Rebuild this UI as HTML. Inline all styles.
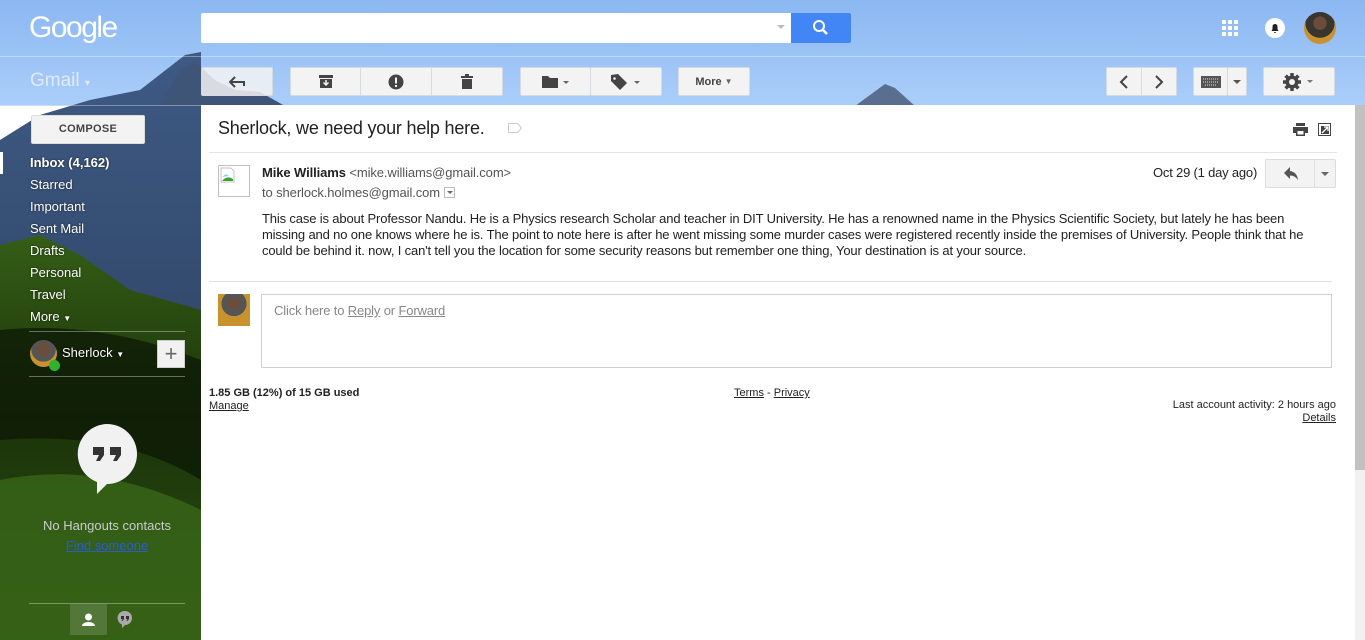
<!DOCTYPE html>
<html><head><meta charset="utf-8"><style>
*{box-sizing:border-box;margin:0;padding:0}
html,body{background:#fff}
body{width:1365px;height:635px;overflow:hidden;position:relative;font-family:"Liberation Sans",Arial,sans-serif;font-size:13px;color:#222;}
.abs{position:absolute}
.sky{position:absolute;left:0;top:0;width:1365px;height:106px;background:linear-gradient(180deg,#8bb7f2 0,#a9cdf9 100px)}
.bg{position:absolute;left:0;top:0;width:201px;height:640px;overflow:hidden}
.btn{position:absolute;top:67px;height:29px;background:#f3f3f3;border:1px solid #d6dbe2;border-radius:2px;display:flex;align-items:center;justify-content:center;color:#444}
.nav a{display:block;color:#fff;font-size:13px;height:22px;line-height:22px;text-shadow:0 0 2px rgba(0,0,0,.6)}
u{color:inherit}
</style></head><body>
<div class="sky"></div>
<div class="bg">
<svg width="201" height="640" viewBox="0 0 201 640">
<defs>
<linearGradient id="g" x1="0" y1="0" x2="0" y2="1"><stop offset="0" stop-color="#355e17"/><stop offset=".45" stop-color="#1b3309"/><stop offset="1" stop-color="#2b4f13"/></linearGradient>
<linearGradient id="m" x1="0" y1="0" x2="0" y2="1"><stop offset="0" stop-color="#3e5a84"/><stop offset="1" stop-color="#263650"/></linearGradient>
</defs>
<path d="M0 140 L40 115 L90 100 L140 90 L185 55 L201 52 L201 640 L0 640Z" fill="url(#m)"/>
<path d="M0 245 L40 235 L80 255 L130 290 L201 310 L201 640 L0 640Z" fill="url(#g)"/>
<path d="M0 330 Q100 320 201 360 L201 480 Q120 430 0 440Z" fill="#0c1805" opacity=".75"/>
<path d="M0 480 Q100 460 201 510 L201 640 L0 640Z" fill="#376417" opacity=".85"/>
</svg>
</div>
<svg class="abs" style="left:160px;top:50px" width="160" height="56"><path d="M0 56 L20 20 L35 12 L55 30 L75 40 L100 42 L125 56Z" fill="#3e5577"/></svg>
<svg class="abs" style="left:855px;top:78px" width="60" height="28"><path d="M0 28 L30 6 L40 10 L60 28Z" fill="#5a6f8f"/></svg>
<div class="abs" style="left:0;top:56px;width:1365px;height:1px;background:rgba(255,255,255,.35)"></div>
<div class="abs" style="left:0;top:105px;width:201px;height:1px;background:rgba(255,255,255,.35)"></div>
<div class="abs" style="left:29px;top:11px;color:#fff;font-size:30px;letter-spacing:-1.5px">Google</div>
<div class="abs" style="left:201px;top:13px;width:590px;height:30px;background:#fff;border-radius:2px 0 0 2px"></div>
<div class="abs" style="left:777px;top:25px;border:4px solid transparent;border-top-color:#bbb"></div>
<div class="abs" style="left:791px;top:13px;width:60px;height:30px;background:#4285f4;border-radius:0 2px 2px 0"><svg width="60" height="30"><circle cx="28" cy="13" r="5" stroke="#fff" stroke-width="2" fill="none"/><path d="M31.5 16.5 L36 21" stroke="#fff" stroke-width="2.5"/></svg></div>
<svg class="abs" style="left:1222px;top:20px" width="17" height="17" fill="#fff"><rect x="0" y="0" width="4" height="4"/><rect x="6" y="0" width="4" height="4"/><rect x="12" y="0" width="4" height="4"/><rect x="0" y="6" width="4" height="4"/><rect x="6" y="6" width="4" height="4"/><rect x="12" y="6" width="4" height="4"/><rect x="0" y="12" width="4" height="4"/><rect x="6" y="12" width="4" height="4"/><rect x="12" y="12" width="4" height="4"/></svg>
<div class="abs" style="left:1265px;top:18px;width:20px;height:20px;border-radius:50%;background:#fff"><svg width="20" height="20"><path d="M6.5 13 L7.5 11 V8.5 A2.5 2.5 0 0 1 12.5 8.5 V11 L13.5 13Z M9 14 h2 a1 1 0 0 1 -2 0" fill="#222"/></svg></div>
<div class="abs" style="left:1304px;top:12px;width:32px;height:32px;border-radius:50%;background:radial-gradient(circle at 50% 35%,#6b4d3a 0 25%,#3b3530 26% 55%,#c8922e 56%)"></div>
<div class="abs" style="left:30px;top:70px;color:#e8eef8;font-size:19px;opacity:.9">Gmail <span style="font-size:10px">▾</span></div>
<div class="btn" style="left:201px;width:72px;background:rgba(243,243,243,.85)"><svg width="16" height="12"><path d="M6 1 L1 6 L6 11 M1 6 H15 V10" stroke="#444" stroke-width="2" fill="none"/></svg></div>
<div class="btn" style="left:290px;width:71px;border-radius:2px 0 0 2px"><svg width="14" height="13"><path d="M0 0h14v3H0z M1 4h12v9H1z" fill="#444"/><path d="M7 5v5 M4.5 7.5 7 10 9.5 7.5" stroke="#f3f3f3" stroke-width="1.5" fill="none"/></svg></div>
<div class="btn" style="left:360px;width:72px;border-radius:0"><svg width="16" height="16"><circle cx="8" cy="8" r="7.5" fill="#444"/><rect x="7" y="3.5" width="2" height="6" fill="#f3f3f3"/><rect x="7" y="11" width="2" height="2" fill="#f3f3f3"/></svg></div>
<div class="btn" style="left:431px;width:72px;border-radius:0 2px 2px 0"><svg width="12" height="15"><path d="M0 2h12v2H0z M4 0h4v2H4z M1 5h10v10H1z" fill="#444"/></svg></div>
<div class="btn" style="left:520px;width:71px"><svg width="28" height="14"><path d="M0 1h6l2 2h8v10H0z" fill="#444"/><path d="M21 6l3 3 3-3z" fill="#666"/></svg></div>
<div class="btn" style="left:590px;width:72px"><svg width="30" height="16"><path d="M0 1v6l9 9 7-7-9-9z" fill="#444"/><circle cx="3.5" cy="4.5" r="1.3" fill="#f3f3f3"/><path d="M23 7l3 3 3-3z" fill="#666"/></svg></div>
<div class="btn" style="left:678px;width:72px;font-size:11px;font-weight:bold">More <span style="font-size:8px;margin-left:3px;color:#666">▼</span></div>
<div class="btn" style="left:1106px;width:36px;border-radius:2px 0 0 2px"><svg width="10" height="14"><path d="M8 1 L2 7 L8 13" stroke="#444" stroke-width="2" fill="none"/></svg></div>
<div class="btn" style="left:1141px;width:36px;border-radius:0 2px 2px 0"><svg width="10" height="14"><path d="M2 1 L8 7 L2 13" stroke="#444" stroke-width="2" fill="none"/></svg></div>
<div class="btn" style="left:1193px;width:35px"><svg width="20" height="12"><rect width="20" height="12" fill="#555"/><path d="M2 3h16M2 6h16M4 9h12" stroke="#ddd" stroke-width="1" stroke-dasharray="1 1"/></svg></div>
<div class="btn" style="left:1227px;width:20px"><svg width="8" height="4"><path d="M0 0h8L4 4z" fill="#555"/></svg></div>
<div class="btn" style="left:1263px;width:72px"><svg width="32" height="18"><g transform="translate(9 9)"><circle r="6.5" fill="#444"/><g stroke="#444" stroke-width="3.5"><path d="M0 -9V9M-9 0H9M-6.4 -6.4L6.4 6.4M-6.4 6.4L6.4 -6.4"/></g><circle r="3" fill="#f3f3f3"/></g><path d="M24 7l3 3 3-3z" fill="#777"/></svg></div>
<div class="abs" style="left:31px;top:115px;width:114px;height:29px;background:#f3f3f3;border:1px solid #ddd;border-radius:2px;font-size:11px;font-weight:bold;color:#444;text-align:center;line-height:27px;letter-spacing:.3px">COMPOSE</div>
<div class="abs" style="left:0;top:152px;width:3px;height:22px;background:#fff"></div>
<div class="abs nav" style="left:30px;top:152px">
<a style="font-weight:bold">Inbox (4,162)</a><a>Starred</a><a>Important</a><a>Sent Mail</a><a>Drafts</a><a>Personal</a><a>Travel</a><a style="height:21px">More <span style="font-size:8px">▼</span></a>
</div>
<div class="abs" style="left:29px;top:331px;width:156px;height:1px;background:rgba(255,255,255,.35)"></div>
<div class="abs" style="left:30px;top:340px;width:27px;height:27px;border-radius:50%;background:radial-gradient(circle at 50% 35%,#6b4d3a 0 28%,#555 29% 55%,#c8922e 56%)"></div>
<div class="abs" style="left:49px;top:360px;width:11px;height:11px;border-radius:50%;background:#2db32d"></div>
<div class="abs" style="left:62px;top:345px;color:#fff;font-size:13px;text-shadow:0 0 2px #000">Sherlock <span style="font-size:8px">▼</span></div>
<div class="abs" style="left:157px;top:340px;width:28px;height:28px;background:#f1f1f1;border:1px solid #ccc;color:#666;font-size:22px;text-align:center;line-height:25px">+</div>
<div class="abs" style="left:29px;top:376px;width:156px;height:1px;background:rgba(255,255,255,.35)"></div>
<svg class="abs" style="left:77px;top:424px" width="60" height="72"><path d="M30 0A30 30 0 0 1 30 60L20 70V58A30 30 0 0 1 30 0Z" fill="#f1f1f1"/><path d="M16 23h11v8l-4 6h-4l3-6h-6z M33 23h11v8l-4 6h-4l3-6h-6z" fill="#333"/></svg>
<div class="abs" style="left:0;top:518px;width:214px;text-align:center;color:#c8ccd0;font-size:13px">No Hangouts contacts</div>
<div class="abs" style="left:0;top:538px;width:214px;text-align:center;color:#2a5bd7;font-size:13px;text-decoration:underline">Find someone</div>
<div class="abs" style="left:29px;top:603px;width:156px;height:1px;background:rgba(255,255,255,.35)"></div>
<div class="abs" style="left:70px;top:604px;width:37px;height:31px;background:rgba(255,255,255,.15)"><svg width="37" height="31"><circle cx="18.5" cy="13" r="3.5" fill="#fff"/><path d="M12 22a6.5 4 0 0 1 13 0z" fill="#fff"/></svg></div>
<svg class="abs" style="left:117px;top:611px" width="16" height="17"><path d="M8 0A7 7 0 0 1 8 14L5 17V13.5A7 7 0 0 1 8 0Z" fill="#aaa"/><path d="M4 5h3v3l-1.5 2h-1l1-2H4z M9 5h3v3l-1.5 2h-1l1-2H9z" fill="#333"/></svg>
<div class="abs" style="left:201px;top:105px;width:1154px;height:535px;background:#fff"></div>
<div class="abs" style="left:1355px;top:105px;width:10px;height:535px;background:#f1f1f1"></div>
<div class="abs" style="left:1355px;top:105px;width:10px;height:365px;background:#c1c1c1"></div>
<div class="abs" style="left:218px;top:118px;font-size:18px;color:#222;letter-spacing:-.2px">Sherlock, we need your help here.</div>
<svg class="abs" style="left:508px;top:123px" width="14" height="10"><path d="M.5 .5h9l4 4.5-4 4.5h-9z" fill="none" stroke="#ccc"/></svg>
<svg class="abs" style="left:1293px;top:123px" width="15" height="13"><path d="M3 0h9v3H3z M0 4h15v6h-3v3H3v-3H0z" fill="#444"/><rect x="4.5" y="8" width="6" height="3.5" fill="#fff"/></svg>
<svg class="abs" style="left:1318px;top:123px" width="13" height="13"><path d="M.5 .5h12v12H.5z" fill="none" stroke="#444"/><path d="M3 3h8v8H3z" fill="#444"/><path d="M4 10L10 4M6 4h4v4" stroke="#fff" fill="none" stroke-width="1.3"/></svg>
<div class="abs" style="left:209px;top:152px;width:1128px;height:1px;background:#e5e5e5"></div>
<div class="abs" style="left:218px;top:165px;width:32px;height:32px;border:1px solid #c0c0c0"><svg width="16" height="16" style="margin:1px"><path d="M1 1h10l3 3v11H1z" fill="#fff" stroke="#aaa" stroke-width=".7"/><path d="M2 14 Q7 8 13 12 V14z" fill="#3aa335"/><path d="M2 10 L6 7 L9 9" fill="#9dc6f0"/></svg></div>
<div class="abs" style="left:262px;top:165px;font-size:13px;letter-spacing:-.1px"><b>Mike Williams</b> <span style="color:#555">&lt;mike.williams@gmail.com&gt;</span></div>
<div class="abs" style="left:262px;top:185px;font-size:13px;color:#555;letter-spacing:-.1px">to sherlock.holmes@gmail.com <span style="display:inline-block;width:11px;height:11px;border:1px solid #bbb;vertical-align:-1px;position:relative"><span style="position:absolute;left:2px;top:3px;border:3px solid transparent;border-top-color:#666"></span></span></div>
<div class="abs" style="left:1153px;top:165px;font-size:13px;color:#222;letter-spacing:-.2px">Oct 29 (1 day ago)</div>
<div class="abs" style="left:1265px;top:159px;width:50px;height:29px;background:#f3f3f3;border:1px solid #ddd;border-radius:2px 0 0 2px"><svg width="50" height="27"><path d="M24 7L18 13L24 19V15.5Q29 15.5 32 20Q31 12 24 11z" fill="#555"/></svg></div>
<div class="abs" style="left:1314px;top:159px;width:22px;height:29px;background:#f3f3f3;border:1px solid #ddd;border-radius:0 2px 2px 0"><svg width="20" height="27"><path d="M6 12h8l-4 4z" fill="#666"/></svg></div>
<div class="abs" style="left:262px;top:211px;width:1060px;font-size:13px;line-height:16px;color:#222;letter-spacing:-.15px">This case is about Professor Nandu. He is a Physics research Scholar and teacher in DIT University. He has a renowned name in the Physics Scientific Society, but lately he has been missing and no one knows where he is. The point to note here is after he went missing some murder cases were registered recently inside the premises of University. People think that he could be behind it. now, I can't tell you the location for some security reasons but remember one thing, Your destination is at your source.</div>
<div class="abs" style="left:209px;top:281px;width:1123px;height:1px;background:#e0e0e0"></div>
<div class="abs" style="left:218px;top:294px;width:32px;height:32px;background:radial-gradient(circle at 50% 30%,#6b4d3a 0 22%,#555 23% 45%,#c8922e 46%)"></div>
<div class="abs" style="left:261px;top:294px;width:1071px;height:74px;border:1px solid #cfcfcf"></div>
<div class="abs" style="left:274px;top:303px;font-size:13px;color:#888;letter-spacing:-.15px">Click here to <u>Reply</u> or <u>Forward</u></div>
<div class="abs" style="left:209px;top:387px;font-size:11px;color:#222;line-height:13px"><b>1.85 GB (12%) of 15 GB used</b><br><u>Manage</u></div>
<div class="abs" style="left:734px;top:387px;font-size:11px;color:#222"><u>Terms</u> - <u>Privacy</u></div>
<div class="abs" style="right:29px;top:399px;font-size:11px;color:#222;text-align:right;line-height:13px">Last account activity: 2 hours ago<br><u>Details</u></div>
</body></html>
